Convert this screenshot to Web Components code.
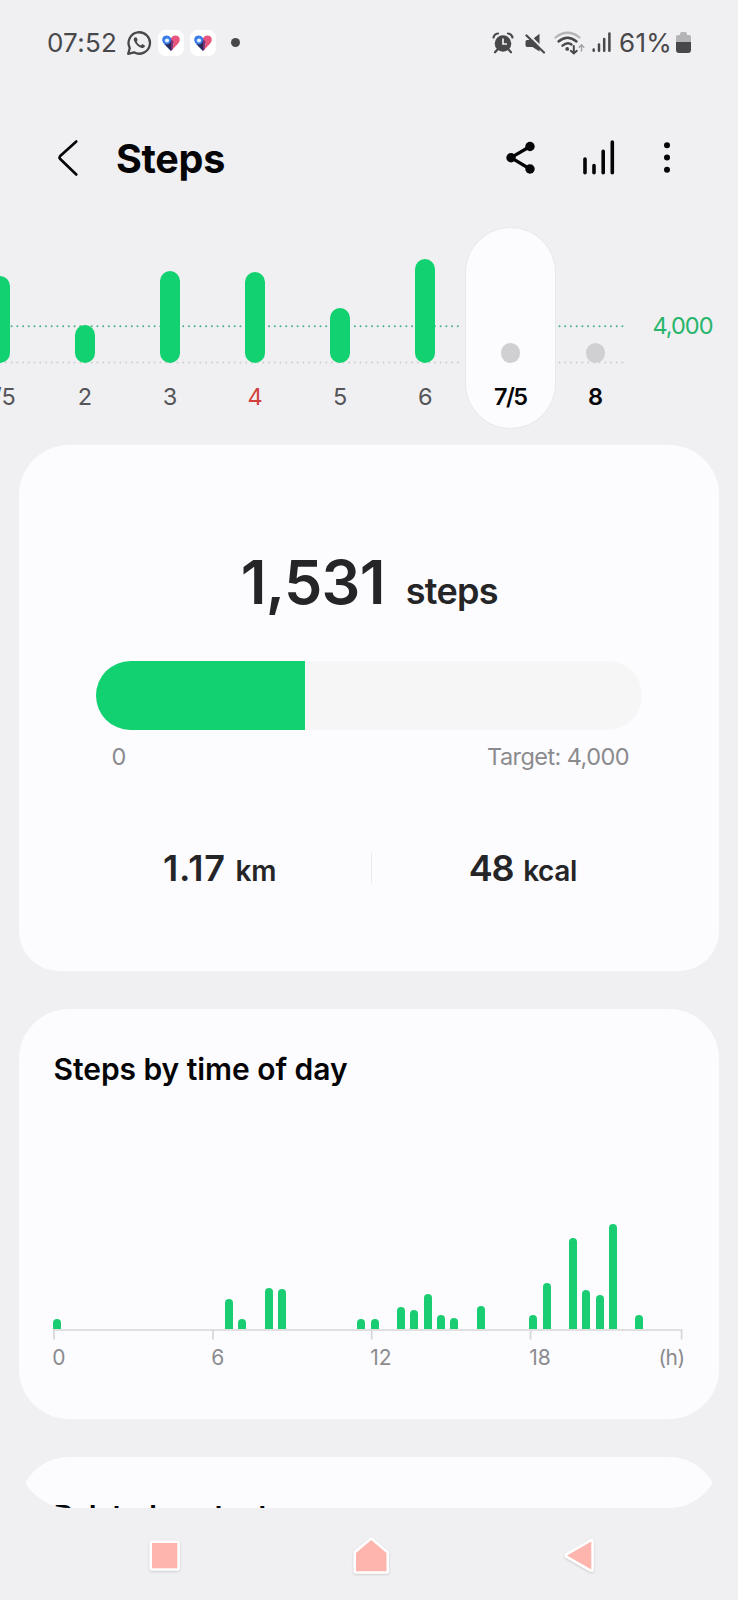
<!DOCTYPE html>
<html lang="en">
<head>
<meta charset="utf-8">
<title>Steps</title>
<style>
    html, body {
        margin: 0;
        padding: 0;
    }
    body {
        width: 738px;
        height: 1600px;
        overflow: hidden;
        background: #f0f0f2;
        color: #252528;
        font-family: Inter, Roboto, sans-serif;
    }
</style>
</head>
<body>
<steps-app></steps-app>

<script>
class BaseElement extends HTMLElement {
    constructor(){
        super();
        this.attachShadow({mode: 'open'})
    }
    render(){
        const template = document.createElement('template')
        template.innerHTML = `<style>${this.getStyles()}</style>${this.getTemplate()}`
        this.shadowRoot.appendChild( template.content.cloneNode(true) )
    }
    connectedCallback(){
        this.render()
    }
}

// Text whose tracking is set so that it fills the given width
class FitText extends BaseElement {
    getStyles(){
        return `
            :host { display: inline-block; white-space: nowrap; }
        `
    }
    getTemplate(){
        return `<slot></slot>`
    }
    connectedCallback(){
        this.render()
        const width = Number(this.getAttribute('width'))
        const length = this.textContent.length
        const natural = this.getBoundingClientRect().width
        if (width && natural) {
            this.style.letterSpacing = `${(width - natural) / length}px`
        }
    }
}
customElements.define('fit-text', FitText)

class StatusBar extends BaseElement {
    getStyles(){
        return `
            :host {
                display: flex;
                align-items: center;
                justify-content: space-between;
                height: 85px;
                padding: 0 47px 0 47px;
                box-sizing: border-box;
                color: #48484b;
                font-size: 26px;
                line-height: 30px;
            }
            div { display: flex; align-items: center; }
            svg { display: block; flex: none; }
            .app { width: 26px; height: 26px; border-radius: 8px; background: #fff; margin-right: 6px; }
            .dot { width: 9px; height: 9px; border-radius: 50%; background: #48484b; margin-left: 9.5px; }
        `
    }
    getHeart(){
        return `
            <svg class="app" viewBox="0 0 26 26">
                <path d="M13 21 L6 13.8 C2.5 10 4.500 5.500 8.500 5.500 C10.700 5.500 12.200 6.500 13 8.200 Z" fill="#3b7bea"/>
                <path d="M13 21 L6.300 14 C9 15.300 12.500 14 13 10.500 Z" fill="#2b2a5c"/>
                <path d="M13 8.200 C14 6.300 15.500 5.500 17.500 5.500 C21.500 5.500 23.500 10 20 13.800 L13 21 L15.500 14 Z" fill="#e8557f"/>
                <path d="M13 8.200 L15.500 12 L14.500 19.400 L13 21 Z" fill="#7a3474"/>
                <circle cx="9" cy="10.500" r="2.100" fill="#e6f3ff"/>
            </svg>
        `
    }
    getTemplate(){
        return `
            <div>
                <fit-text width="70">07:52</fit-text>
                <svg width="26" height="26" viewBox="0 0 26 26" style="margin: 0 6px 0 8.500px">
                    <path d="M2.200 23.800 L3.800 18 A10.700 10.700 0 1 1 8 22.300 Z" fill="none" stroke="#48484b" stroke-width="2.300" stroke-linejoin="round"/>
                    <path d="M9.300 7.200 C7.700 7.500 7.300 9.500 8.200 11.300 C9.800 14.700 12.300 17 15.800 17.900 C17.800 18.300 19 17 18.900 15.500 L16.200 14.100 L14.900 15.500 C13 14.800 11.500 13.300 10.700 11.500 L11.700 10.100 L10.600 7.500 Z" fill="#48484b"/>
                </svg>
                ${this.getHeart()}
                ${this.getHeart()}
                <span class="dot"></span>
            </div>
            <div>
                <svg width="22" height="22" viewBox="0 0 22 22" style="margin-right: 9.500px">
                    <circle cx="11" cy="11.500" r="8.300" fill="#48484b"/>
                    <path d="M1.500 5.500 A5 5 0 0 1 6 1.500 M20.500 5.500 A5 5 0 0 0 16 1.500 M5.500 17.500 L3 20.300 M16.500 17.500 L19 20.300" fill="none" stroke="#48484b" stroke-width="2.200" stroke-linecap="round"/>
                    <path d="M11 6.500 V12 H15" fill="none" stroke="#f0f0f2" stroke-width="1.700"/>
                </svg>
                <svg width="22" height="22" viewBox="0 0 22 22" style="margin-right: 8.500px">
                    <path d="M3 8 H7.500 L15.500 1.800 V19.500 L8.500 15 H3 Q1.500 15 1.500 13 V10 Q1.500 8 3 8 Z" fill="#48484b"/>
                    <path d="M3.500 1.500 L21 19" stroke="#f0f0f2" stroke-width="2"/>
                    <path d="M2.500 3.500 L20 20.500" stroke="#48484b" stroke-width="2.200" stroke-linecap="round"/>
                </svg>
                <svg width="32" height="24" viewBox="0 0 32 24" style="margin-right: 5.500px">
                    <g fill="none" stroke-linecap="round">
                        <path d="M1.500 6.500 Q13.500 -3 25.500 6.500" stroke="#b4b4b6" stroke-width="2.200"/>
                        <path d="M4.500 10.500 Q13.500 2.800 22.500 10.500 M8.500 14.700 Q13.500 10.500 17.500 13.500" stroke="#48484b" stroke-width="2.400"/>
                        <path d="M19.800 15 V22.300 M16.800 19.800 L19.800 22.500 L22.800 19.800" stroke="#48484b" stroke-width="2"/>
                        <path d="M27.500 20 V14 M25.200 16.200 L27.500 13.800 L29.800 16.200" stroke="#a4a4a6" stroke-width="1.500"/>
                    </g>
                    <circle cx="13.200" cy="17.900" r="1.900" fill="#48484b"/>
                </svg>
                <svg width="19" height="21" viewBox="0 0 19 21" style="margin-right: 8.500px">
                    <path d="M1.700 17.500 V18.800 M7 12.500 V18.800 M12.200 7 V18.800 M17.400 1.500 V18.800" stroke="#48484b" stroke-width="2.500" stroke-linecap="round"/>
                </svg>
                <fit-text width="53">61%</fit-text>
                <svg width="15" height="21" viewBox="0 0 15 21" style="margin-left: 4px">
                    <path d="M0 10 V5 Q0 3 2 3 H4 V2 Q4 0 6 0 H9 Q11 0 11 2 V3 H13 Q15 3 15 5 V10 Z" fill="#b4b4b6"/>
                    <path d="M0 10 H15 V18 Q15 21 12 21 H3 Q0 21 0 18 Z" fill="#48484b"/>
                </svg>
            </div>
        `
    }
}
customElements.define('status-bar', StatusBar)

class AppHeader extends BaseElement {
    getStyles(){
        return `
            :host {
                display: flex;
                align-items: center;
                height: 142.5px;
                padding: 5px 67px 0 57px;
                box-sizing: border-box;
                color: #050507;
            }
            h1 { flex: 1; margin: 0 0 0 37px; font-size: 39.500px; font-weight: 700; line-height: 50px; }
            svg { display: block; position: relative; top: -0.5px; }
        `
    }
    getTemplate(){
        return `
            <svg width="22" height="38" viewBox="0 0 22 38">
                <path d="M19.300 2.500 L3 17.200 Q2 18.500 3 19.800 L19.300 35.500" fill="none" stroke="#050507" stroke-width="2.600" stroke-linecap="round"/>
            </svg>
            <h1><slot></slot></h1>
            <svg width="30" height="34" viewBox="0 0 30 34">
                <path d="M24 5.500 L5 16.700 L24 28" fill="none" stroke="#050507" stroke-width="3.200"/>
                <g fill="#050507"><circle cx="24" cy="5.500" r="4.700"/><circle cx="5" cy="16.700" r="4.700"/><circle cx="24" cy="28" r="4.700"/></g>
            </svg>
            <svg width="34" height="38" viewBox="0 0 34 38" style="margin-left: 46px">
                <path d="M3 20 V33.800 M12 26.500 V33.800 M21.200 12.300 V33.800 M30.300 3 V33.800" stroke="#050507" stroke-width="3.600" stroke-linecap="round"/>
            </svg>
            <svg width="8" height="34" viewBox="0 0 8 34" style="margin-left: 47.500px">
                <g fill="#050507"><circle cx="4" cy="4.200" r="3"/><circle cx="4" cy="16.500" r="3"/><circle cx="4" cy="28.700" r="3"/></g>
            </svg>
        `
    }
}
customElements.define('app-header', AppHeader)

class DayColumn extends BaseElement {
    getStyles(){
        return `
            :host {
                display: flex;
                flex: none;
                flex-direction: column;
                align-items: center;
                width: 85.1px;
                height: 200.5px;
                color: #55555a;
                font-size: 23.5px;
            }
            :host([bold]) { color: #050507; font-weight: 600; }
            :host([sunday]) { color: #d2403e; }
            :host([selected]) {
                width: 89px;
                margin: 0 -1.95px;
                border-radius: 44.5px;
                background: #fcfcfe;
                box-shadow: 0 0 0 1px #e9e9eb;
            }
            .plot { display: flex; align-items: flex-end; height: 135px; }
            .bar { width: 19.5px; border-radius: 10px; background: #12d170; }
            :host([bold]) .bar { background: #d0d0d2; }
            .label { line-height: 68px; height: 65.5px; }
        `
    }
    getTemplate(){
        return `
            <div class="plot"><div class="bar" style="height: ${this.getAttribute('size')}px"></div></div>
            <div class="label"><slot></slot></div>
        `
    }
}
customElements.define('day-column', DayColumn)

class WeekStrip extends BaseElement {
    getStyles(){
        return `
            :host { display: block; position: relative; height: 217px; }
            svg { position: absolute; left: 0; top: 0; }
            .days { position: relative; display: flex; margin-left: -42.8px; }
            .goal { margin: 86.5px 0 0 14.5px; color: #27b56c; font-size: 23.5px; line-height: 24px; }
        `
    }
    getTemplate(){
        return `
            <svg width="738" height="200" viewBox="0 0 738 200" fill="none" stroke-linecap="round" stroke-width="2" stroke-dasharray="0 5.72">
                <path d="M0.200 98.300 H463 M559.500 98.300 H625" stroke="#45b088"/>
                <path d="M0.200 134.500 H463 M559.500 134.500 H625" stroke="#cfcfd2"/>
            </svg>
            <div class="days">
                <day-column size="87">1/5</day-column>
                <day-column size="38">2</day-column>
                <day-column size="92">3</day-column>
                <day-column size="91" sunday>4</day-column>
                <day-column size="54.5">5</day-column>
                <day-column size="104">6</day-column>
                <day-column size="19.5" bold selected><fit-text width="32.5">7/5</fit-text></day-column>
                <day-column size="19.5" bold>8</day-column>
                <div class="goal"><fit-text width="60">4,000</fit-text></div>
            </div>
        `
    }
}
customElements.define('week-strip', WeekStrip)

class HealthCard extends BaseElement {
    getStyles(){
        return `
            :host {
                display: block;
                box-sizing: border-box;
                background: #fcfcfe;
                border-radius: 50px;
            }
        `
    }
    getTemplate(){
        return `<slot></slot>`
    }
}
customElements.define('health-card', HealthCard)

class StepSummary extends BaseElement {
    getStyles(){
        return `
            :host { display: block; padding: 97px 47px 0 47.5px; font-weight: 600; }
            .value { display: flex; justify-content: center; align-items: baseline; height: 80px; font-size: 61px; line-height: 80px; }
            .value .unit { margin-left: 21px; font-size: 36px; }
            .track { height: 69px; margin: 39.500px 30px 0 29.500px; border-radius: 35px; overflow: hidden; background: #f6f6f7; }
            .fill { width: 38.275%; height: 100%; background: #12d170; }
            .range { display: flex; justify-content: space-between; margin: 11.5px 43px 0 45px; color: #8b8b8e; font-size: 23.5px; font-weight: 400; line-height: 30px; }
            .stats { display: grid; grid-template-columns: 1fr 1px 1fr; align-items: center; margin: 71px -2px 0 2px; text-align: center; font-size: 36px; line-height: 50px; }
            .stats .unit { margin-left: 9.5px; font-size: 28px; }
            .line { height: 30px; margin-top: -3px; background: #eaeaec; }
        `
    }
    getTemplate(){
        return `
            <div class="value"><fit-text width="144">1,531</fit-text><fit-text class="unit" width="92">steps</fit-text></div>
            <div class="track"><div class="fill"></div></div>
            <div class="range"><span>0</span><fit-text width="142">Target: 4,000</fit-text></div>
            <div class="stats">
                <div><fit-text width="63">1.17</fit-text><fit-text class="unit" width="41">km</fit-text></div>
                <div class="line"></div>
                <div><fit-text width="45">48</fit-text><fit-text class="unit" width="54">kcal</fit-text></div>
            </div>
        `
    }
}
customElements.define('step-summary', StepSummary)

class HourChart extends BaseElement {
    // half-hour slot: height of its bar
    getBars(){
        const bars = {
            0: 9.5, 13: 30, 14: 9.5, 16: 40.5, 17: 39.5, 23: 9.5, 24: 9.5,
            26: 22, 27: 19, 28: 35, 29: 13.5, 30: 10.5, 32: 23, 36: 13.5,
            37: 46, 39: 91, 40: 39, 41: 33.5, 42: 104.5, 44: 13.5
        }
        return Object.keys(bars).map(slot =>
            `<i style="grid-column: ${Number(slot) + 1}; height: ${bars[slot]}px"></i>`
        ).join('')
    }
    getStyles(){
        return `
            :host { display: block; }
            .plot { display: grid; grid-template-columns: repeat(48, 13.235px); align-items: end; justify-items: center; height: 240px; margin-left: 31.400px; }
            i { grid-row: 1; width: 8px; border-radius: 4px 4px 0 0; background: #1bcd72; }
            svg { display: block; margin-left: 34px; }
            .hours { display: grid; grid-template-columns: 159px 159px 159px 1fr auto; margin: 4px 34.5px 0 33.300px; color: #8b8b8e; font-size: 21px; line-height: 28px; }
        `
    }
    getTemplate(){
        return `
            <div class="plot">${this.getBars()}</div>
            <svg width="630" height="11" viewBox="0 0 630 11">
                <path d="M0 1 H629.500 M1 1 V10.500 M160 1 V10.500 M318.700 1 V10.500 M477.500 1 V10.500 M628.600 1 V10.500" fill="none" stroke="#d6d6d8" stroke-width="1.700"/>
            </svg>
            <div class="hours"><span>0</span><span>6</span><span>12</span><span>18</span><fit-text width="26">(h)</fit-text></div>
        `
    }
}
customElements.define('hour-chart', HourChart)

class NavBar extends BaseElement {
    getStyles(){
        return `
            :host { display: flex; align-items: center; height: 92px; }
            svg { display: block; overflow: visible; filter: drop-shadow(0 1px 1px #00000026); }
            path { fill: #fdb5ae; stroke: #fff; stroke-width: 5px; stroke-linejoin: round; paint-order: stroke; }
        `
    }
    getTemplate(){
        return `
            <svg width="26" height="26" style="margin: 3px 0 0 152px"><path d="M0 0 H25.300 V25.300 H0 Z"/></svg>
            <svg width="31" height="32" style="margin: 4px 0 0 178px"><path d="M0 13 L15.200 0 L30.500 13 V31.300 H0 Z"/></svg>
            <svg width="25" height="29" style="margin: 3px 0 0 180px"><path d="M0 14.500 L24.300 0.500 V28.500 Z"/></svg>
        `
    }
}
customElements.define('nav-bar', NavBar)

class StepsApp extends BaseElement {
    getStyles(){
        return `
            :host { display: flex; flex-direction: column; height: 1600px; }
            main {
                display: flex;
                flex-direction: column;
                gap: 38px;
                height: 1063.5px;
                margin: 0 19px;
                border-radius: 0 0 50px 50px;
                overflow: hidden;
            }
            health-card { flex: none; }
            .summary { height: 526px; border-radius: 50px 50px 40px 40px; }
            .daytime { height: 410.5px; }
            .related { height: 200px; }
            h2 { margin: 0; padding: 40px 0 0 34.5px; color: #050507; font-size: 30px; font-weight: 600; line-height: 40px; }
            .related h2 { padding-top: 38.5px; }
        `
    }
    getTemplate(){
        return `
            <status-bar></status-bar>
            <app-header><fit-text width="109">Steps</fit-text></app-header>
            <week-strip></week-strip>
            <main>
                <health-card class="summary"><step-summary></step-summary></health-card>
                <health-card class="daytime">
                    <h2><fit-text width="294">Steps by time of day</fit-text></h2>
                    <hour-chart></hour-chart>
                </health-card>
                <health-card class="related"><h2><fit-text width="214">Related content</fit-text></h2></health-card>
            </main>
            <nav-bar></nav-bar>
        `
    }
}
customElements.define('steps-app', StepsApp)
</script>
</body>
</html>
